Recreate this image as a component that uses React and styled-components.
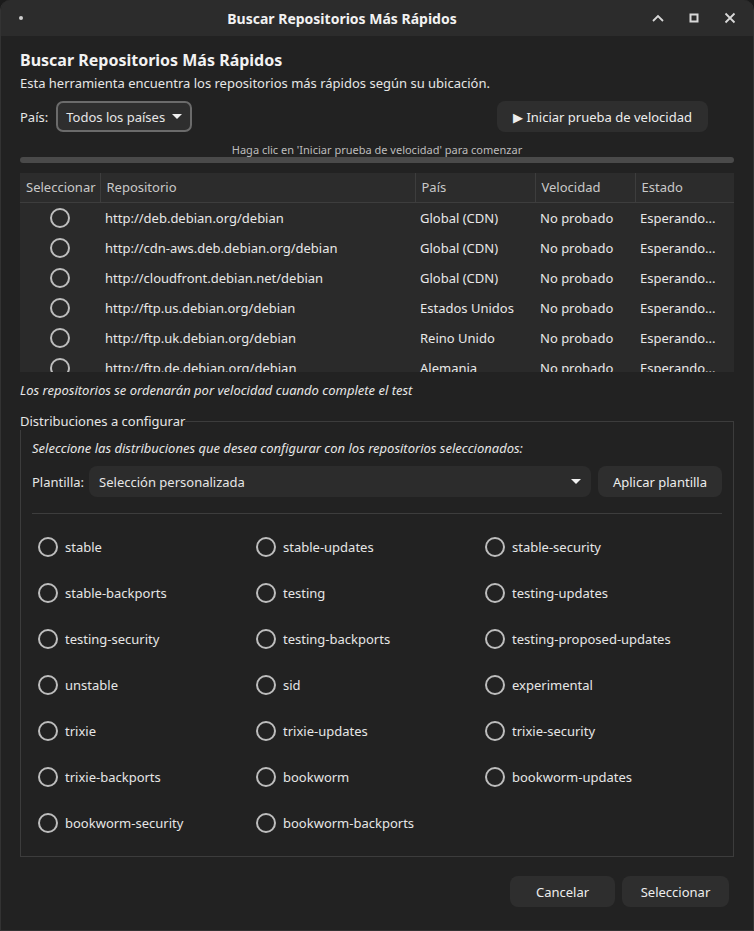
import React from 'react';
import styled, { createGlobalStyle } from 'styled-components';

const GlobalStyle = createGlobalStyle`
  html, body {
    margin: 0;
    padding: 0;
    background: #1b1b1b;
  }
  body {
    font-family: 'Noto Sans', 'Open Sans', sans-serif;
    font-size: 13px;
    color: #e6e6e6;
  }
`;

const repos = [
  { url: 'http://deb.debian.org/debian', country: 'Global (CDN)' },
  { url: 'http://cdn-aws.deb.debian.org/debian', country: 'Global (CDN)' },
  { url: 'http://cloudfront.debian.net/debian', country: 'Global (CDN)' },
  { url: 'http://ftp.us.debian.org/debian', country: 'Estados Unidos' },
  { url: 'http://ftp.uk.debian.org/debian', country: 'Reino Unido' },
  { url: 'http://ftp.de.debian.org/debian', country: 'Alemania' },
];

const dists = [
  'stable', 'stable-updates', 'stable-security',
  'stable-backports', 'testing', 'testing-updates',
  'testing-security', 'testing-backports', 'testing-proposed-updates',
  'unstable', 'sid', 'experimental',
  'trixie', 'trixie-updates', 'trixie-security',
  'trixie-backports', 'bookworm', 'bookworm-updates',
  'bookworm-security', 'bookworm-backports',
];

const Window = styled.div`
  width: 754px;
  height: 931px;
  box-sizing: border-box;
  background: #222222;
  border: 1px solid #333;
  border-top: none;
  border-radius: 10px 10px 0 0;
  overflow: hidden;
  display: flex;
  flex-direction: column;
`;

const TitleBar = styled.div`
  height: 36px;
  flex-shrink: 0;
  background: #2c2c2c;
  display: flex;
  align-items: center;
  padding: 0 12px 0 18px;
`;

const TitleDot = styled.span`
  width: 4px;
  height: 4px;
  border-radius: 50%;
  background: #cfcfcf;
`;

const Title = styled.div`
  flex: 1;
  text-align: center;
  font-weight: 700;
  font-size: 14px;
  color: #f2f2f2;
  padding-left: 14px;
`;

const WinButtons = styled.div`
  display: flex;
  gap: 14px;
  align-items: center;
`;

const WinButton = styled.span`
  width: 22px;
  height: 22px;
  display: flex;
  align-items: center;
  justify-content: center;
`;

const Body = styled.div`
  flex: 1;
  padding: 13px 19px 0 19px;
  display: flex;
  flex-direction: column;
`;

const Heading = styled.h1`
  margin: 0;
  font-size: 16px;
  font-weight: 700;
  color: #f2f2f2;
  line-height: 22px;
`;

const Subtitle = styled.p`
  margin: 2px 0 0 0;
  line-height: 20px;
`;

const ControlsRow = styled.div`
  display: flex;
  align-items: center;
  margin-top: 8px;
  height: 31px;
  padding-right: 26px;
`;

const Label = styled.span`
  margin-right: ${(p) => p.$gap ?? 8}px;
`;

const CountrySelect = styled.div`
  height: 31px;
  box-sizing: border-box;
  border: 2px solid #6b6b6b;
  border-radius: 7px;
  background: #2e2e2e;
  display: flex;
  align-items: center;
  padding: 0 8px;
  gap: 7px;
`;

const Caret = styled.span`
  width: 0;
  height: 0;
  border-left: 5px solid transparent;
  border-right: 5px solid transparent;
  border-top: 5px solid #f0f0f0;
`;

const Spacer = styled.div`
  flex: 1;
`;

const Button = styled.button`
  height: 31px;
  border: none;
  border-radius: 8px;
  background: #2e2e2e;
  color: #ededed;
  font-family: inherit;
  font-size: 13px;
  padding: 0 ${(p) => p.$pad || 16}px;
  display: flex;
  align-items: center;
  justify-content: center;
  gap: 3px;
  min-width: ${(p) => p.$min || 0}px;
  cursor: pointer;
`;

const Hint = styled.div`
  text-align: center;
  font-size: 11px;
  color: #bdbdbd;
  margin-top: 11px;
  line-height: 14px;
`;

const Progress = styled.div`
  height: 6px;
  border-radius: 3px;
  background: #4a4a4a;
`;

const TableWrap = styled.div`
  margin-top: 10px;
  height: 199px;
  overflow: hidden;
  background: #2a2a2a;
`;

const Table = styled.table`
  width: 100%;
  border-collapse: collapse;
  table-layout: fixed;
`;

const Th = styled.th`
  box-sizing: border-box;
  height: 29px;
  text-align: left;
  font-weight: 400;
  color: #c9c9c9;
  background: #2c2c2c;
  padding: 0 6px;
  border-bottom: 1px solid #3d3d3d;
  border-left: ${(p) => (p.$first ? 'none' : '1px solid #3d3d3d')};
  width: ${(p) => (p.$w ? `${p.$w}px` : 'auto')};
  white-space: nowrap;
  overflow: hidden;
`;

const Td = styled.td`
  height: 30px;
  padding: 0 5px;
  text-align: ${(p) => (p.$center ? 'center' : 'left')};
  white-space: nowrap;
  overflow: hidden;
  color: #e8e8e8;
`;

const Radio = styled.span`
  display: inline-block;
  width: 16px;
  height: 16px;
  border: 2px solid #bdbdbd;
  border-radius: 50%;
  vertical-align: middle;
  flex-shrink: 0;
`;

const Note = styled.div`
  font-style: italic;
  margin-top: 9px;
  line-height: 18px;
`;

const Fieldset = styled.fieldset`
  margin: 13px 0 0 0;
  padding: 9px 11px 23px 11px;
  border: 1px solid #3c3c3c;
  border-radius: 0;
  min-width: 0;
`;

const Legend = styled.legend`
  padding: 0;
  color: #e6e6e6;
  margin-left: -12px;
`;

const FieldNote = styled.div`
  font-style: italic;
  line-height: 18px;
`;

const TemplateRow = styled.div`
  display: flex;
  align-items: center;
  gap: 5px;
  margin-top: 9px;
  height: 31px;
`;

const Combo = styled.div`
  flex: 1;
  height: 31px;
  border-radius: 8px;
  background: #2c2c2c;
  display: flex;
  align-items: center;
  padding: 0 10px;
  margin-right: 2px;
  justify-content: space-between;
`;

const Separator = styled.div`
  height: 1px;
  background: #3d3d3d;
  margin-top: 16px;
`;

const DistGrid = styled.div`
  display: grid;
  grid-template-columns: 218px 229px 1fr;
  row-gap: 26px;
  margin-top: 23px;
  padding-left: 6px;
`;

const DistItem = styled.label`
  display: flex;
  align-items: center;
  gap: 7px;
  height: 20px;
`;

const Footer = styled.div`
  display: flex;
  justify-content: flex-end;
  gap: 7px;
  margin-top: 19px;
  padding-right: 5px;
`;

function ChevronUp() {
  return (
    <svg width="14" height="10" viewBox="0 0 14 10">
      <path d="M2 8 L7 3 L12 8" fill="none" stroke="#d8d8d8" strokeWidth="1.8" />
    </svg>
  );
}

function Maximize() {
  return (
    <svg width="12" height="12" viewBox="0 0 12 12">
      <rect x="2.5" y="2.5" width="7" height="7" fill="none" stroke="#d8d8d8" strokeWidth="2" />
    </svg>
  );
}

function Close() {
  return (
    <svg width="12" height="12" viewBox="0 0 12 12">
      <path d="M1.5 1.5 L10.5 10.5 M10.5 1.5 L1.5 10.5" stroke="#d8d8d8" strokeWidth="1.8" />
    </svg>
  );
}

export default function App() {
  return (
    <>
      <GlobalStyle />
      <Window>
        <TitleBar>
          <TitleDot />
          <Title>Buscar Repositorios Más Rápidos</Title>
          <WinButtons>
            <WinButton><ChevronUp /></WinButton>
            <WinButton><Maximize /></WinButton>
            <WinButton><Close /></WinButton>
          </WinButtons>
        </TitleBar>
        <Body>
          <Heading>Buscar Repositorios Más Rápidos</Heading>
          <Subtitle>
            Esta herramienta encuentra los repositorios más rápidos según su ubicación.
          </Subtitle>
          <ControlsRow>
            <Label>País:</Label>
            <CountrySelect>
              Todos los países
              <Caret />
            </CountrySelect>
            <Spacer />
            <Button $pad={16}>▶ Iniciar prueba de velocidad</Button>
          </ControlsRow>
          <Hint>Haga clic en 'Iniciar prueba de velocidad' para comenzar</Hint>
          <Progress />
          <TableWrap>
            <Table>
              <thead>
                <tr>
                  <Th $first $w={80}>Seleccionar</Th>
                  <Th $w={315}>Repositorio</Th>
                  <Th $w={120}>País</Th>
                  <Th $w={100}>Velocidad</Th>
                  <Th>Estado</Th>
                </tr>
              </thead>
              <tbody>
                {repos.map((r) => (
                  <tr key={r.url}>
                    <Td $center><Radio /></Td>
                    <Td>{r.url}</Td>
                    <Td>{r.country}</Td>
                    <Td>No probado</Td>
                    <Td>Esperando...</Td>
                  </tr>
                ))}
              </tbody>
            </Table>
          </TableWrap>
          <Note>Los repositorios se ordenarán por velocidad cuando complete el test</Note>
          <Fieldset>
            <Legend>Distribuciones a configurar</Legend>
            <FieldNote>
              Seleccione las distribuciones que desea configurar con los repositorios seleccionados:
            </FieldNote>
            <TemplateRow>
              <Label $gap={0}>Plantilla:</Label>
              <Combo>
                Selección personalizada
                <Caret />
              </Combo>
              <Button $pad={15}>Aplicar plantilla</Button>
            </TemplateRow>
            <Separator />
            <DistGrid>
              {dists.map((d) => (
                <DistItem key={d}>
                  <Radio />
                  {d}
                </DistItem>
              ))}
            </DistGrid>
          </Fieldset>
          <Footer>
            <Button $min={105}>Cancelar</Button>
            <Button $min={107}>Seleccionar</Button>
          </Footer>
        </Body>
      </Window>
    </>
  );
}
